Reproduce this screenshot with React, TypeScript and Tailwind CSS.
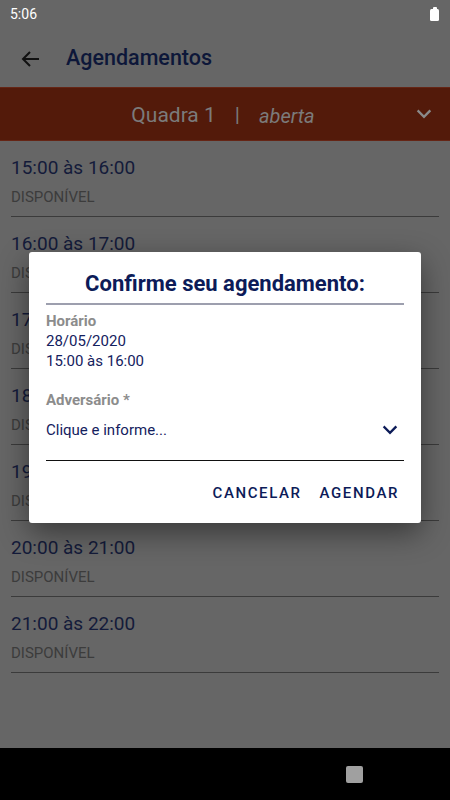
import React from 'react';

const slots = [
	'15:00 às 16:00',
	'16:00 às 17:00',
	'17:00 às 18:00',
	'18:00 às 19:00',
	'19:00 às 20:00',
	'20:00 às 21:00',
	'21:00 às 22:00'
];

function Chevron({ className }: { className?: string }) {
	return (
		<svg viewBox="0 0 24 24" className={className} fill="none" stroke="currentColor" strokeWidth={2.6}>
			<path d="M6 9l6 6 6-6" strokeLinecap="square" />
		</svg>
	);
}

function SlotRow({ label }: { label: string }) {
	return (
		<div className="mx-[11px] pt-[13px] pb-[9px] border-b border-[#3b3b3b]">
			<div className="h-[28px] leading-[28px] text-[19px] text-[#141b3a]">{label}</div>
			<div className="mt-[5px] h-[20px] leading-[20px] text-[15px] text-[#3c3c3c]">DISPONÍVEL</div>
		</div>
	);
}

function ConfirmDialog() {
	return (
		<div className="absolute left-[29px] top-[252px] w-[392px] bg-white rounded-[3px] shadow-[0_10px_30px_rgba(0,0,0,0.45)] px-[17px] pt-[17px] pb-[20px]">
			<h2 className="h-[30px] leading-[30px] text-center text-[22px] font-bold text-[#0c1b58]">
				Confirme seu agendamento:
			</h2>
			<div className="mt-[4px] h-[2px] bg-[#9d9fae]" />
			<div className="mt-[6px] text-[15px] leading-[20px]">
				<div className="font-bold text-[#8c8c8c]">Horário</div>
				<div className="text-[#14215e]">28/05/2020</div>
				<div className="text-[#14215e] leading-[21px]">15:00 às 16:00</div>
			</div>
			<div className="mt-[18px] h-[20px] leading-[20px] text-[15px] font-bold text-[#8c8c8c]">Adversário *</div>
			<div className="pt-[9px] pb-[19px] border-b-[1.5px] border-[#111] flex items-center justify-between">
				<span className="h-[20px] leading-[20px] text-[15px] text-[#14215e]">Clique e informe...</span>
				<Chevron className="w-[22px] h-[22px] mr-[3px] text-[#0c1b58]" />
			</div>
			<div className="mt-[22px] flex justify-end gap-[18px] pr-[5px] text-[15px] leading-[20px] font-medium tracking-[1.6px] text-[#0c1b58]">
				<span>CANCELAR</span>
				<span>AGENDAR</span>
			</div>
		</div>
	);
}

export default function App() {
	return (
		<div
			className="relative w-[450px] h-[800px] overflow-hidden bg-[#666666] flex flex-col"
			style={{ fontFamily: 'Roboto, "Noto Sans", sans-serif' }}
		>
			{/* status bar */}
			<div className="h-[30px] flex items-center justify-between px-[10px] text-white">
				<span className="text-[14px] leading-none -mt-[2px]">5:06</span>
				<div className="-mt-[3px] mr-[1px] flex flex-col items-center">
					<div className="w-[4px] h-[2px] bg-white rounded-t-[1px]" />
					<div className="w-[9px] h-[12px] bg-white rounded-[1.5px]" />
				</div>
			</div>

			{/* app bar */}
			<div className="h-[57px] flex items-center">
				<svg viewBox="0 0 24 24" className="ml-[19px] w-[24px] h-[24px] text-[#111]" fill="none" stroke="currentColor" strokeWidth={2}>
					<path d="M20 12H5M11 5l-7 7 7 7" />
				</svg>
				<h1 className="ml-[23px] text-[21.5px] font-medium text-[#0d1739]">Agendamentos</h1>
			</div>

			{/* court selector */}
			<div className="h-[54px] bg-[#531a0a] border-y border-[#652515] flex items-center relative">
				<div className="flex-1 flex items-center justify-center text-[21px] text-[#7b7b7b] pl-[4px] pt-[3px]">
					<span>Quadra 1</span>
					<span className="mx-[19px] text-[#7b7b7b]">|</span>
					<span className="italic text-[20px] mr-[8px]">aberta</span>
				</div>
				<Chevron className="absolute right-[15px] top-[15px] w-[22px] h-[22px] text-[#8a8a8a]" />
			</div>

			{/* slots */}
			<div className="flex-1">
				{slots.map((s) => (
					<SlotRow key={s} label={s} />
				))}
			</div>

			{/* navigation bar */}
			<div className="h-[52px] bg-black flex items-center">
				<div className="ml-[346px] w-[17px] h-[17px] rounded-[2px] bg-[#a0a0a0]" />
			</div>

			<ConfirmDialog />
		</div>
	);
}
